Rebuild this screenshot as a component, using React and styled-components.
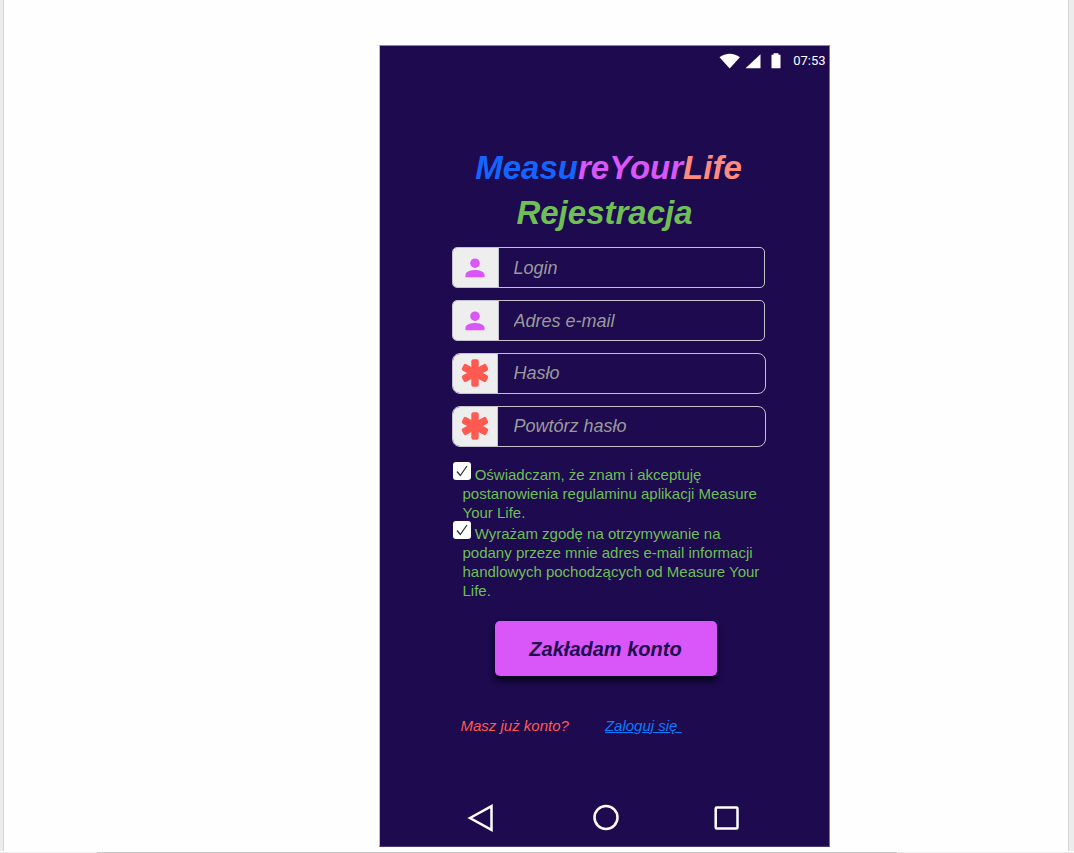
import React from "react";
import styled, { createGlobalStyle } from "styled-components";

const color = {
  night: "#1d0a4f",
  pink: "#d956f8",
  blue: "#1464ff",
  salmon: "#ff8a80",
  green: "#6fbf54",
  red: "#ff5a52",
  link: "#0a7bff",
  addon: "#eeeeee",
  outline: "#c4c1cc",
};

const GlobalStyle = createGlobalStyle`
  *, *::before, *::after { box-sizing: border-box; }
  body {
    margin: 0;
    background: #fefefe;
    font-family: "Liberation Sans", Arial, sans-serif;
  }
`;

const Page = styled.div`
  min-height: 100vh;
  display: flex;
  flex-direction: column;
`;

const Viewer = styled.main`
  flex: 1;
  display: flex;
  justify-content: center;
  padding: 45px 0 4px 136px;
  margin-bottom: 1px;
  border: solid #ececec;
  border-width: 0 5px 0 3px;
  box-shadow: inset 1px 0 #d6d6d6, inset -1px 0 #d6d6d6;
`;

const ScrollTrack = styled.div`
  height: 1px;
  padding: 0 16.5% 0 9%;
  background: #eeeeee;
`;

const ScrollThumb = styled.div`
  height: 1px;
  background: #c8c8c8;
`;

const Phone = styled.section`
  width: 451px;
  max-width: 100%;
  display: flex;
  flex-direction: column;
  background: ${color.night};
  border: 1px solid;
  border-color: #8e85a6 #7b7097 #4b3d73 #bcb7ca;
`;

const StatusBar = styled.header`
  display: flex;
  align-items: center;
  justify-content: flex-end;
  height: 30px;
  padding-right: 3px;
  color: #fff;
  font: 13px/16px Roboto, sans-serif;
`;

const StatusIcons = styled.svg`
  width: 64px;
  height: 16px;
  margin-right: 10px;
  fill: #fff;
`;

const Content = styled.form`
  flex: 1;
  display: flex;
  flex-direction: column;
  padding: 69px 63px 52px 72px;
`;

const Title = styled.h1`
  margin: 0;
  font-size: 33px;
  line-height: 45px;
  font-style: italic;
  text-align: center;
`;

const Subtitle = styled(Title).attrs({ as: "h2" })`
  padding-right: 8px;
  color: ${color.green};
`;

const Tint = styled.span`
  color: ${(p) => p.$color};
`;

const Fields = styled.div`
  display: flex;
  flex-direction: column;
  gap: 12px;
  margin: 12px 0 18px;
`;

const Field = styled.label`
  display: flex;
  height: 41px;
  overflow: hidden;
  border: 1px solid ${color.outline};
  border-radius: ${(p) => (p.$round ? 8 : 5)}px;
  margin-right: ${(p) => (p.$round ? 0 : 1)}px;
`;

const Addon = styled.span`
  flex: none;
  display: grid;
  place-items: center;
  width: ${(p) => (p.$secret ? 45 : 46)}px;
  padding-bottom: ${(p) => (p.$secret ? 1 : 0)}px;
  background: ${color.addon};
  border-right: 1px solid ${color.outline};
`;

const TextInput = styled.input`
  flex: 1;
  min-width: 0;
  padding: ${(p) => (p.$secret ? "0 15px 2px 16px" : "0 15px")};
  border: 0;
  outline: 0;
  background: transparent;
  color: #fff;
  font: italic 18px/20px "Liberation Sans", Arial, sans-serif;

  &::placeholder {
    color: #9a9a9a;
    opacity: 1;
  }
`;

const Consents = styled.div`
  display: flex;
  flex-direction: column;
  gap: 2px;
`;

const Consent = styled.label`
  display: block;
  padding-left: 11px;
  text-indent: -10px;
  color: ${color.green};
  font-size: 15px;
  line-height: 19px;
`;

const CheckWrap = styled.span`
  position: relative;
  display: inline-block;
  width: 18px;
  height: 18px;
  margin-top: -6px;
  vertical-align: baseline;
  text-indent: 0;
`;

const CheckInput = styled.input`
  appearance: none;
  display: block;
  width: 18px;
  height: 18px;
  margin: 0;
  border-radius: 3px;
  background: #fff;

  &:not(:checked) + svg {
    display: none;
  }
`;

const Tick = styled.svg`
  position: absolute;
  inset: 0;
  pointer-events: none;
`;

const SubmitButton = styled.button`
  width: 222px;
  height: 55px;
  margin: 21px 0 40px 43px;
  border: 0;
  border-radius: 5px;
  background: ${color.pink};
  box-shadow: 0 5px 6px rgba(4, 4, 16, 0.85);
  color: ${color.night};
  font: italic bold 20px/24px "Liberation Sans", Arial, sans-serif;
`;

const LoginRow = styled.p`
  display: flex;
  gap: 36px;
  margin: 0 0 0 9px;
  font-size: 15px;
  line-height: 19px;
  font-style: italic;
  color: ${color.red};
`;

const LoginLink = styled.a`
  color: ${color.link};
`;

const NavBar = styled.nav`
  display: flex;
  justify-content: space-between;
  align-items: center;
  height: 58px;
  padding: 0 89px 0 86px;
`;

const NavButton = styled.button`
  display: block;
  padding: 0;
  border: 0;
  background: none;

  svg {
    display: block;
    width: 32px;
    height: 32px;
    fill: none;
    stroke: #fff;
    stroke-width: 2.5;
  }
`;

function PersonIcon() {
  return (
    <svg width="20" height="20" viewBox="0 0 20 20" fill={color.pink} aria-hidden="true">
      <circle cx="10" cy="5.2" r="4.8" />
      <path d="M.5 19.2v-2.4c0-3.3 6.3-4.7 9.5-4.7s9.5 1.4 9.5 4.7v2.4z" />
    </svg>
  );
}

function AsteriskIcon() {
  return (
    <svg width="28" height="28" viewBox="0 0 28 28" fill={color.red} aria-hidden="true">
      {[0, 62, 118].map((angle) => (
        <rect key={angle} x="10.3" y="0.2" width="7.4" height="27.6" rx="2" transform={`rotate(${angle} 14 14)`} />
      ))}
    </svg>
  );
}

const fields = [
  { name: "login", label: "Login", type: "text" },
  { name: "email", label: "Adres e-mail", type: "email" },
  { name: "password", label: "Hasło", type: "password", secret: true },
  { name: "repeat", label: "Powtórz hasło", type: "password", secret: true },
];

const consents = [
  "Oświadczam, że znam i akceptuję postanowienia regulaminu aplikacji Measure Your Life.",
  "Wyrażam zgodę na otrzymywanie na podany przeze mnie adres e-mail informacji handlowych pochodzących od Measure Your Life.",
];

export default function App() {
  return (
    <Page>
      <GlobalStyle />
      <Viewer>
        <Phone>
          <StatusBar>
            <StatusIcons viewBox="0 0 64 16" aria-hidden="true">
              <path d="M0.5 4.3C6.3-.5 15.1-.5 20.9 4.3L10.7 15.5z" />
              <path d="M41.5 1.2v14H26.500z" />
              <path d="M52.5 1.7h2V.3h5v1.4h2v13.500h-9z" />
            </StatusIcons>
            <time>07:53</time>
          </StatusBar>

          <Content onSubmit={(e) => e.preventDefault()}>
            <Title>
              <Tint $color={color.blue}>Measu</Tint>
              <Tint $color={color.pink}>reYour</Tint>
              <Tint $color={color.salmon}>Life</Tint>
            </Title>
            <Subtitle>Rejestracja</Subtitle>

            <Fields>
              {fields.map((f) => (
                <Field key={f.name} $round={f.secret}>
                  <Addon $secret={f.secret}>{f.secret ? <AsteriskIcon /> : <PersonIcon />}</Addon>
                  <TextInput
                    type={f.type}
                    name={f.name}
                    placeholder={f.label}
                    aria-label={f.label}
                    $secret={f.secret}
                  />
                </Field>
              ))}
            </Fields>

            <Consents>
              {consents.map((text) => (
                <Consent key={text}>
                  <CheckWrap>
                    <CheckInput type="checkbox" defaultChecked />
                    <Tick width="18" height="18" viewBox="0 0 18 18" fill="none" stroke="#333" strokeWidth="1.3">
                      <path d="M4 9.5l3.3 4L14 4" />
                    </Tick>
                  </CheckWrap>{" "}
                  {text}
                </Consent>
              ))}
            </Consents>

            <SubmitButton type="submit">Zakładam konto</SubmitButton>

            <LoginRow>
              <span>Masz już konto?</span>
              <LoginLink href="#login">Zaloguj się&nbsp;</LoginLink>
            </LoginRow>
          </Content>

          <NavBar>
            <NavButton type="button" aria-label="Wstecz">
              <svg viewBox="0 0 32 32">
                <path d="M4 17L25.5 5.2v23.6z" />
              </svg>
            </NavButton>
            <NavButton type="button" aria-label="Ekran główny">
              <svg viewBox="0 0 32 32">
                <circle cx="19" cy="16.5" r="11.5" />
              </svg>
            </NavButton>
            <NavButton type="button" aria-label="Ostatnie">
              <svg viewBox="0 0 32 32">
                <rect x="7.7" y="6.5" width="21.8" height="21" rx="1" />
              </svg>
            </NavButton>
          </NavBar>
        </Phone>
      </Viewer>
      <ScrollTrack>
        <ScrollThumb />
      </ScrollTrack>
    </Page>
  );
}
